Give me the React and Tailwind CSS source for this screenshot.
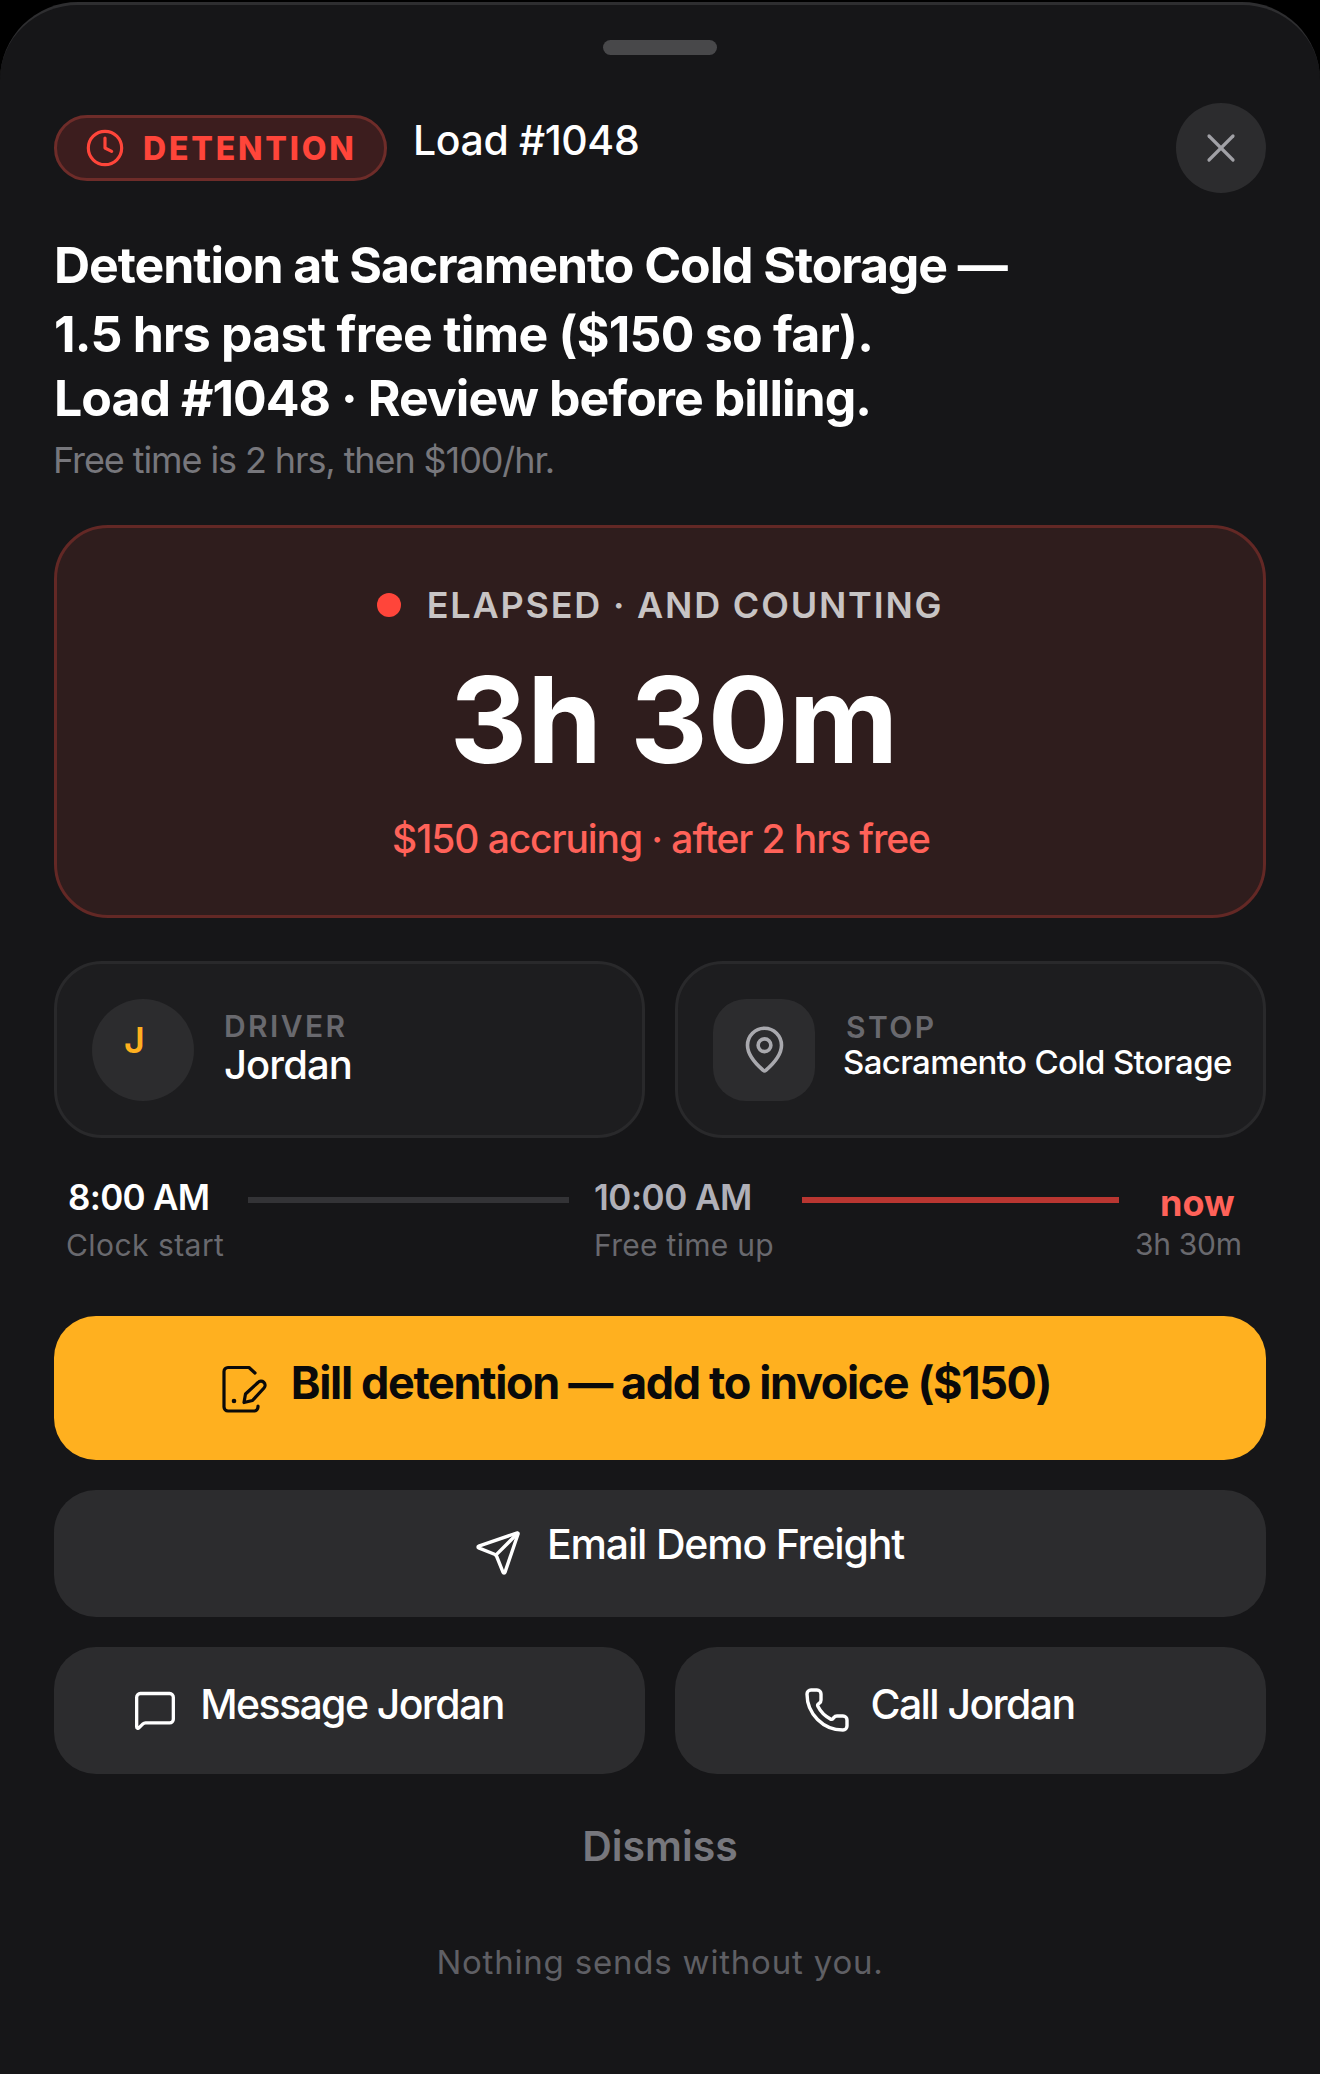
import React from 'react';
import { Clock, X, MapPin, Send, MessageSquare, Phone } from 'lucide-react';

const BillIcon = () => (
  <svg width="45" height="48" viewBox="0 0 45 48" fill="none" stroke="currentColor" strokeWidth="3.2" strokeLinecap="round" strokeLinejoin="round">
    <path d="M33 8 27 2.5H6A4 4 0 0 0 2 6.5V42a4 4 0 0 0 4 4h26a4 4 0 0 0 4-4v-1" />
    <path d="M12 36h.01" strokeWidth="4.6" />
    <path d="M22 37.5l1.5-8.5L36 17.5a4 4 0 0 1 6 5.5L30.5 35.5z" />
  </svg>
);

const App = () => {
  return (
    <div className="min-h-screen bg-black pt-[2px] font-['Inter',sans-serif]">
      <div className="h-[2072px] rounded-t-[78px] border-t-[3px] border-[#2e2e30] bg-[#161618] px-[54px]">
        {/* Grab handle */}
        <div className="mx-auto mt-[35px] h-[15px] w-[114px] rounded-full bg-[#48484a]" />

        {/* Header */}
        <div className="mt-[48px] flex items-start">
          <div className="mt-[12px] flex h-[66px] w-[333px] items-center rounded-full border-[3px] border-[#6e2c29] bg-[#3c1d1e] pl-[28px] text-[#ff453a]">
            <Clock size={40} strokeWidth={1.9} />
            <span className="ml-[18px] mt-[1px] text-[32px] font-extrabold tracking-[2.8px]">DETENTION</span>
          </div>
          <span className="ml-[26px] mt-[12px] text-[41px] leading-[50px] font-medium tracking-[-0.4px] text-white">Load #1048</span>
          <button className="ml-auto flex h-[90px] w-[90px] items-center justify-center rounded-full bg-[#2c2c2e] text-[#a1a1a6]">
            <X size={48} strokeWidth={1.6} />
          </button>
        </div>

        {/* Headline */}
        <h1 className="mt-[38px] text-[50px] font-bold text-white">
          <div className="leading-[69px] tracking-[-1.08px]">Detention at Sacramento Cold Storage —</div>
          <div className="leading-[69px] tracking-[-0.75px]">1.5 hrs past free time ($150 so far).</div>
          <div className="-mt-[5px] leading-[69px] tracking-[-0.97px]">Load #1048 · Review before billing.</div>
        </h1>
        <p className="-ml-[1px] mt-[3px] text-[36px] leading-[48px] tracking-[-1.1px] text-[#77777c]">Free time is 2 hrs, then $100/hr.</p>

        {/* Elapsed timer */}
        <div className="mt-[41px] flex h-[393px] flex-col items-center rounded-[54px] border-[3px] border-[#632825] bg-[#2f1d1d] pt-[53px]">
          <div className="flex items-center">
            <span className="h-[24px] w-[24px] rounded-full bg-[#ff453a]" />
            <span className="ml-[26px] text-[36px] leading-[48px] font-semibold tracking-[1.8px] text-[#c8c4c4]">ELAPSED · AND COUNTING</span>
          </div>
          <div className="mt-[18px] pl-[28px] text-[120px] leading-[145px] font-bold tracking-[0px] text-white">3h 30m</div>
          <div className="ml-[2px] mt-[22px] text-[39px] leading-[50px] font-medium tracking-[-1.1px] text-[#ff6259]">$150 accruing · after 2 hrs free</div>
        </div>

        {/* Driver and stop */}
        <div className="mt-[43px] grid grid-cols-2 gap-[30px]">
          <div className="flex h-[177px] items-center rounded-[48px] border-[3px] border-[#29292b] bg-[#1d1d1f] pl-[35px]">
            <div className="flex h-[102px] w-[102px] shrink-0 justify-center rounded-full bg-[#2c2c2e] pr-[17px] pt-[21px] text-[36px] leading-[40px] font-semibold text-[#ffb01f]">J</div>
            <div className="ml-[30px] pb-[1px]">
              <div className="text-[30px] leading-[36px] font-semibold tracking-[2.4px] text-[#69696e]">DRIVER</div>
              <div className="-mt-[4px] text-[40px] leading-[50px] font-medium tracking-[-0.9px] text-white">Jordan</div>
            </div>
          </div>
          <div className="flex h-[177px] items-center rounded-[48px] border-[3px] border-[#29292b] bg-[#1d1d1f] pl-[35px]">
            <div className="flex h-[102px] w-[102px] shrink-0 items-center justify-center rounded-[33px] bg-[#2c2c2e] text-[#a9a9ae]">
              <MapPin size={51} strokeWidth={1.7} />
            </div>
            <div className="ml-[28px] pb-[7px]">
              <div className="ml-[3px] text-[30px] leading-[36px] font-semibold tracking-[2.4px] text-[#69696e]">STOP</div>
              <div className="-mt-[5px] text-[33px] leading-[44px] font-medium tracking-[-0.65px] text-white">Sacramento Cold Storage</div>
            </div>
          </div>
        </div>

        {/* Timeline */}
        <div className="mt-[36px] flex h-[100px] items-start px-[12px]">
          <div className="w-[182px] shrink-0">
            <div className="ml-[2px] text-[35px] leading-[46px] font-semibold tracking-[-0.7px] text-white">8:00 AM</div>
            <div className="mt-[5px] text-[30px] leading-[40px] tracking-[0.45px] text-[#69696e]">Clock start</div>
          </div>
          <div className="mt-[23px] h-[6px] w-[321px] shrink-0 bg-[#333336]" />
          <div className="ml-[25px] w-[208px] shrink-0">
            <div className="text-[35px] leading-[46px] font-semibold tracking-[-0.5px] text-[#b0b0b8]">10:00 AM</div>
            <div className="mt-[5px] text-[30px] leading-[40px] tracking-[0.3px] text-[#69696e]">Free time up</div>
          </div>
          <div className="mt-[23px] h-[6px] w-[317px] shrink-0 bg-[#b93631]" />
          <div className="ml-[16px] flex flex-col items-end">
            <div className="mr-[7px] mt-[7px] text-[36px] leading-[44px] font-bold text-[#ff6259]">now</div>
            <div className="text-[30px] leading-[38px] tracking-[-0.3px] text-[#69696e]">3h 30m</div>
          </div>
        </div>

        {/* Actions */}
        <button className="mt-[42px] flex h-[144px] w-full justify-center rounded-[42px] bg-[#ffb01f] pr-[47px] text-[#0a0a0a]">
          <span className="mt-[49px]"><BillIcon /></span>
          <span className="ml-[24px] mt-[39px] text-[45px] leading-[56px] font-bold tracking-[-1.38px]">Bill detention — add to invoice ($150)</span>
        </button>
        <button className="mt-[30px] flex h-[127px] w-full justify-center rounded-[42px] bg-[#2c2c2e] pl-[58px] text-white">
          <Send size={48} strokeWidth={1.7} className="mt-[39px]" />
          <span className="ml-[25px] mt-[29px] text-[41px] leading-[50px] font-medium tracking-[-1.2px]">Email Demo Freight</span>
        </button>
        <div className="mt-[30px] grid grid-cols-2 gap-[30px]">
          <button className="flex h-[127px] justify-center rounded-[42px] bg-[#2c2c2e] pr-[62px] text-white">
            <MessageSquare size={44} strokeWidth={1.8} className="mt-[41px]" />
            <span className="ml-[23px] mt-[32px] text-[41px] leading-[50px] font-medium tracking-[-1.6px]">Message Jordan</span>
          </button>
          <button className="flex h-[127px] justify-center rounded-[42px] bg-[#2c2c2e] pr-[63px] text-white">
            <Phone size={48} strokeWidth={1.7} className="mt-[39px]" />
            <span className="ml-[19px] mt-[32px] text-[41px] leading-[50px] font-medium tracking-[-1.6px]">Call Jordan</span>
          </button>
        </div>

        <div className="mt-[47px] text-center text-[41px] leading-[50px] font-semibold text-[#77777d]">Dismiss</div>
        <p className="mt-[69px] text-center text-[33px] leading-[44px] tracking-[0.8px] text-[#5f5f64]">Nothing sends without you.</p>
      </div>
    </div>
  );
};

export default App;
